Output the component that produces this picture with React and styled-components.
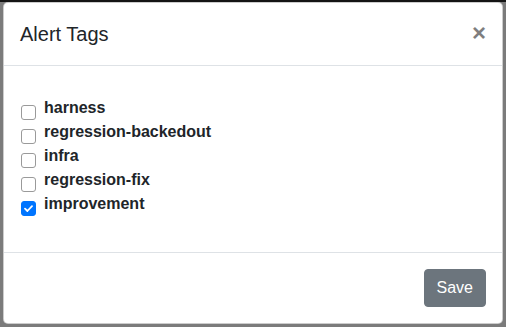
import React, { useState } from 'react'
import styled, { createGlobalStyle } from 'styled-components'

const tags = ['harness', 'regression-backedout', 'infra', 'regression-fix', 'improvement']

function App() {
  const [checked, setChecked] = useState({ improvement: true })

  const toggle = (tag) => setChecked((prev) => ({ ...prev, [tag]: !prev[tag] }))

  return (
    <Backdrop>
      <GlobalStyle />
      <Modal>
        <Header>
          <Title>Alert Tags</Title>
          <Close aria-label="Close">×</Close>
        </Header>
        <Body>
          <TagList>
            {tags.map((tag) => (
              <TagRow key={tag} onClick={() => toggle(tag)}>
                <Box $checked={!!checked[tag]}>
                  {checked[tag] && (
                    <svg width="9" height="7" viewBox="0 0 9 7">
                      <path d="M1 3.6 L3.4 6 L8 1.2" fill="none" stroke="#fff" strokeWidth="1.8" strokeLinecap="round" strokeLinejoin="round" />
                    </svg>
                  )}
                </Box>
                <TagName>{tag}</TagName>
              </TagRow>
            ))}
          </TagList>
        </Body>
        <Footer>
          <SaveButton>Save</SaveButton>
        </Footer>
      </Modal>
    </Backdrop>
  )
}

export default App


const GlobalStyle = createGlobalStyle`
    html, body {
        margin: 0;
        padding: 0;
        background: #7b7b7b;
    }
    body {
        font-family: "Liberation Sans", Arial, sans-serif;
        color: #212529;
    }
`


const Backdrop = styled.div`
    width: 506px;
    height: 327px;
    padding-top: 2px;
    box-sizing: border-box;
    background: linear-gradient(#141414 0 2px, transparent 2px);
    background-color: #7b7b7b;
`


const Modal = styled.div`
    width: 500px;
    margin: 0 auto;
    box-sizing: border-box;
    background: #fff;
    border: 1px solid rgba(0, 0, 0, 0.2);
    border-radius: 5px;
    overflow: hidden;
`


const Header = styled.div`
    display: flex;
    align-items: flex-start;
    justify-content: space-between;
    padding: 16px;
    border-bottom: 1px solid #dee2e6;
`


const Title = styled.h5`
    margin: 0;
    font-size: 20px;
    font-weight: 500;
    line-height: 1.5;
`


const Close = styled.button`
    padding: 16px;
    margin: -16px -16px -16px auto;
    background: transparent;
    border: 0;
    font-family: "Liberation Sans", Arial, sans-serif;
    font-size: 24px;
    font-weight: 700;
    line-height: 1;
    color: #000;
    opacity: 0.5;
    cursor: pointer;
    transform: translateY(2px);
`


const Body = styled.div`
    padding: 16px;
`


const TagList = styled.div`
    display: flex;
    flex-direction: column;
    padding-top: 14px;
    margin-bottom: 20px;
`


const TagRow = styled.label`
    display: flex;
    align-items: flex-start;
    font-size: 16px;
    line-height: 24px;
    cursor: pointer;
`


const Box = styled.span`
    display: flex;
    align-items: center;
    justify-content: center;
    flex: none;
    width: 15px;
    height: 15px;
    margin: 9px 8px 0 1px;
    box-sizing: border-box;
    border-radius: 3px;
    border: 1px solid ${(p) => (p.$checked ? '#0075ff' : '#9a9a9a')};
    background: ${(p) => (p.$checked ? '#0075ff' : '#fff')};
`


const TagName = styled.span`
    font-weight: 700;
    color: #212529;
`


const Footer = styled.div`
    display: flex;
    justify-content: flex-end;
    padding: 16px;
    border-top: 1px solid #dee2e6;
`


const SaveButton = styled.button`
    padding: 6px 12px;
    font-family: "Liberation Sans", Arial, sans-serif;
    font-size: 16px;
    line-height: 24px;
    color: #fff;
    background: #6c757d;
    border: 1px solid #6c757d;
    border-radius: 4px;
    cursor: pointer;
`
